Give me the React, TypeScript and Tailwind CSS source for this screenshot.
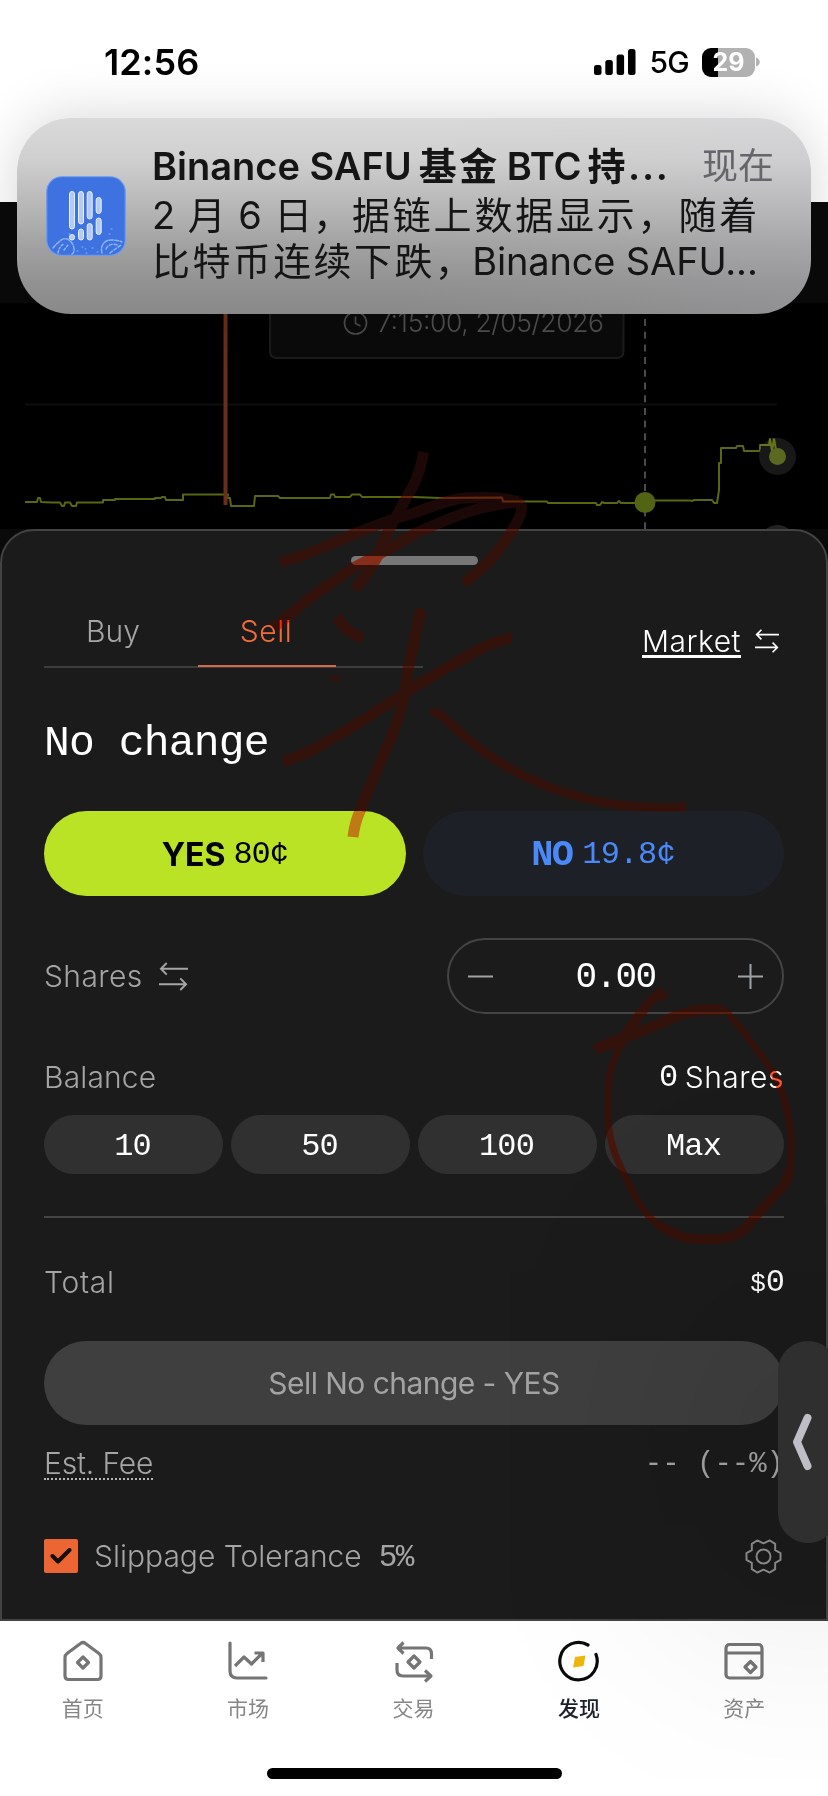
import React from "react";

const SANS = "font-['Inter','Noto_Sans_CJK_SC',sans-serif]";
const MONO = "font-['Liberation_Mono',monospace]";

function StatusBar() {
  return (
    <div className="flex h-[124px] items-center justify-between bg-white pl-[104px] pr-[67px]">
      <span className="text-[36px] font-semibold leading-none tracking-[0.1px] text-black">12:56</span>
      <div className="flex items-center">
        <svg width="42" height="28" viewBox="0 0 42 28" className="mr-[13px]">
          <rect x="0" y="17" width="7.500" height="10" rx="2.5" />
          <rect x="11.3" y="12" width="7.500" height="15" rx="2.5" />
          <rect x="22.6" y="6.500" width="7.500" height="20.500" rx="2.5" />
          <rect x="34" y="1" width="7.500" height="26" rx="2.500" />
        </svg>
        <span className="mr-[13px] text-[30px] font-medium leading-none tracking-[-0.700px] text-black">5G</span>
        <div className="relative flex h-[29px] w-[53px] items-center justify-center overflow-hidden rounded-[9px] bg-[linear-gradient(90deg,#000_0_16px,#b2b2b2_16px)]">
          <span className="text-[25px] font-bold leading-none text-white">29</span>
        </div>
        <svg width="5" height="10" viewBox="0 0 5 10" className="ml-[1px]">
          <path d="M0 0.500C5 2 5 8 0 9.500Z" fill="#b2b2b2" />
        </svg>
      </div>
    </div>
  );
}

function AppIcon() {
  const bars: [number, number, number][] = [
    [26, 15.500, 37.500], [35, 15.500, 32.500], [43.700, 15.500, 27.500], [52.700, 21.500, 16],
    [26, 58.500, 5.500], [35, 53, 11], [43.700, 47.500, 16.500], [52.700, 42, 16.500],
  ];
  return (
    <svg width="80" height="80" viewBox="0 0 80 80" className="shrink-0">
      <rect x="0.75" y="0.75" width="78.500" height="78.500" rx="15" fill="#3d72e0" stroke="#6f9cf0" strokeWidth="1.200" />
      {bars.map(([x, y, h], i) => (
        <rect key={i} x={x - 2.500} y={y} width="5" height={h} rx="2.500" fill="#b4cbf6" stroke="#e6effe" strokeWidth="1" />
      ))}
      <g fill="none" stroke="#a9c8fa" strokeWidth="1.500" strokeLinecap="round" opacity="0.75">
        <path d="M7 72c3-4 5-5 8-8 5-3 10 0 12 5s1 8-1 9" strokeDasharray="4 1.500" />
        <path d="M12 77c1-5 3-8 6-9M18 74l4-5" strokeDasharray="2 2" />
        <path d="M56 77c-2-7 2-13 9-13 5 0 9 1 11 2" strokeDasharray="4 1.500" />
        <path d="M60 73c2-4 6-6 12-4M64 77l4-3 7-5" strokeDasharray="3 2" />
        <path d="M31 75h1M36 71h1M40 77h1M46 72h1M51 76h1M63 58h1M65 53h1M23 58h1M39 73h1" strokeWidth="1" />
      </g>
    </svg>
  );
}

function Notification() {
  return (
    <div className="absolute left-[17px] top-[118px] flex h-[196px] w-[794px] items-center rounded-[54px] bg-[linear-gradient(180deg,#dadada_0%,#d0d0d0_20%,#bababa_42%,#a2a2a2_65%,#919191_85%,#898989_100%)] pl-[29px] shadow-[0_0_56px_rgba(0,0,0,0.17)]">
      <div className="pointer-events-none absolute inset-0 rounded-[54px] bg-[linear-gradient(100deg,transparent_50%,rgba(200,198,215,0.12)_100%)]" />
      <AppIcon />
      <div className="relative ml-[26px] flex w-[622px] flex-col whitespace-nowrap pb-[7px] text-[#151515]">
        <div className="flex h-[50px] items-center justify-between font-semibold">
          <span className="flex items-center text-[38px] leading-none">
            <span>Binance SAFU</span>
            <span className="ml-[7px] text-[38px] font-bold tracking-[2.500px]">基金</span>
            <span className="ml-[7px]">BTC</span>
            <span className="ml-[6px] text-[38px] font-bold tracking-[2.500px]">持</span>
            <span className="tracking-[1.700px]">...</span>
          </span>
          <span className="text-[36px] font-normal leading-none text-[#66656a]">现在</span>
        </div>
        <div className="flex h-[47px] items-center text-[38px] leading-none">
          <span className="tracking-[0.900px]">2 月 6 日，</span>
          <span className="tracking-[2.800px]">据链上数据显示，随着</span>
        </div>
        <div className="flex h-[46px] items-center text-[38px] leading-none">
          <span className="mr-[-3px] tracking-[2.400px]">比特币连续下跌，</span>
          <span className="tracking-[-0.150px]">Binance SAFU...</span>
        </div>
      </div>
    </div>
  );
}

function Chart() {
  return (
    <div className="h-[405px] bg-[#0a0a0a] pt-[101px]">
      <div className="h-[226px] bg-black">
        <svg width="828" height="226" viewBox="0 303 828 226" className="block">
          <path d="M25 404.500H777" stroke="#0e0e0e" strokeWidth="2" />
          <path d="M270 290V351q0 7 7 7H616.500q7 0 7-7V290Z" fill="#0b0b0b" stroke="#1c1c1c" strokeWidth="2" />
          <circle cx="355.500" cy="323" r="11" fill="none" stroke="#4a4a4a" strokeWidth="1.700" />
          <path d="M355.500 316.500v7l5 2.500" fill="none" stroke="#4a4a4a" strokeWidth="1.700" />
          <text x="377" y="332" fill="#505050" fontSize="26.500" fontWeight="300" textLength="227">7:15:00, 2/05/2026</text>
          <path d="M645 306V529" stroke="#4b4b4b" strokeWidth="2" strokeDasharray="7 5.700" strokeDashoffset="-13" />
          <path
            d="M25 502H37L38 498H40L41 502L52 502.500H60L62 506H64L65 502.500H70L72 506H76L77 502.500H103V500H115V499H155V498H161L162 497H165L166 500H183V494.500H228L227 498H230L231 506H254L255 496H278L280 498H330L331 494.500H334L335 497H350L352 494.500H360L362 497H414L440 498L502 497.500L503 501.500H547L548 503H596L597 505H600L602 502L604 503H617L619 501L621 503H645L654 500.500H690L692 501L694 500H712L714 503H717L719 490V463H721V448H736L737 446H743L744 451H760V445H769L770 439L772 451L773 439H775L776 450"
            fill="none" stroke="#57680f" strokeWidth="2" strokeLinejoin="round"
          />
          <path d="M225.500 303V505" stroke="#6e2d18" strokeWidth="4" />
          <circle cx="777.500" cy="456.500" r="18.500" fill="#1c1c1c" fillOpacity="0.85" />
          <path d="M760 445H769L770 439L772 451L774 439L776 450" fill="none" stroke="#64751b" strokeWidth="2" />
          <circle cx="777.500" cy="456.500" r="8.500" fill="#5a6922" />
          <circle cx="645" cy="502.500" r="10.500" fill="#526313" />
          <circle cx="777.500" cy="543.500" r="18.500" fill="#222" />
        </svg>
      </div>
    </div>
  );
}

function SwapIcon({ size, className }: { size: number; className?: string }) {
  return (
    <svg width={size} height={size} viewBox="0 0 30 30" fill="none" stroke="currentColor" strokeWidth="2" className={className}>
      <path d="M30 7H2M8 1L2 7L8 13M0 23H28M22 17L28 23L22 29" />
    </svg>
  );
}

function GearIcon() {
  return (
    <svg width="37" height="35" viewBox="0 0 38 36" fill="none" stroke="#8e8e8e" strokeWidth="2" strokeLinejoin="round">
      <path d="M19 4.500L25.500 1.500L31 5V11.500L36.500 14.500V21.500L31 24.500V31L25.500 34.500L19 31.500L12.500 34.500L7 31V24.500L1.500 21.500V14.500L7 11.500V5L12.500 1.500Z" />
      <circle cx="19" cy="18" r="7.200" />
    </svg>
  );
}

function Sheet() {
  return (
    <div className="flex h-[1092px] flex-col rounded-t-[34px] border-2 border-[#434343] bg-[#1b1b1b] px-[42px] pt-[25px] font-light text-white">
      <div className="ml-[1px] h-[9px] w-[127px] self-center rounded-full bg-[#777]" />

      <div className="mt-[38px] flex h-[65px] justify-between">
        <div className="flex w-[379px] gap-[16px] border-b-2 border-[#3c3d3d] text-[30px]">
          <div className="flex w-[138px] items-center justify-center pb-[6px] text-[#a5a5a5]">Buy</div>
          <div className="-mb-px flex w-[138px] items-center justify-center border-b-2 border-[#d2694a] pb-[6px] pr-[2px] tracking-[0.500px] text-[#f26b3a]">Sell</div>
        </div>
        <div className="flex items-center pr-[5px] pt-[12px]">
          <span className="border-b-[3px] border-white text-[30px] leading-[29px] tracking-[0.500px]"><span className="relative top-[1px]">Market</span></span>
          <SwapIcon size={24} className="mb-[2px] ml-[14px]" />
        </div>
      </div>

      <div className={`${MONO} mt-[47px] flex h-[56px] items-center whitespace-pre text-[43px] font-normal leading-none tracking-[-0.850px]`}>No change</div>

      <div className="mt-[40px] flex h-[85px] gap-[17px]">
        <div className="flex flex-1 items-center justify-center rounded-full bg-[#bae325] text-black">
          <span className="pt-[2px] text-[32px] font-bold leading-none">YES</span>
          <span className={`${MONO} ml-[8px] pt-[3px] text-[32px] font-normal leading-none tracking-[-1.100px]`}>80¢</span>
        </div>
        <div className="flex flex-1 items-center justify-center rounded-full bg-[#1e2028] text-[#4a8af8]">
          <span className={`${MONO} pt-[3px] text-[37px] font-bold leading-none tracking-[-1.800px]`}>NO</span>
          <span className={`${MONO} ml-[10px] pt-[3px] text-[32px] font-normal leading-none tracking-[-0.600px]`}>19.8¢</span>
        </div>
      </div>

      <div className="mt-[42px] flex h-[76px] items-center justify-between">
        <div className="flex items-center text-[#a5a5a5]">
          <span className="text-[30px] leading-none tracking-[0.400px]">Shares</span>
          <SwapIcon size={29} className="ml-[16px]" />
        </div>
        <div className="flex h-full w-[337px] items-center justify-between rounded-full border-2 border-[#444] px-[19px]">
          <svg width="25" height="25" viewBox="0 0 25 25" stroke="#9fa3a5" strokeWidth="2"><path d="M0 12.500H25" /></svg>
          <span className={`${MONO} pt-[4px] text-[36px] font-normal leading-none tracking-[-1.600px]`}>0.00</span>
          <svg width="25" height="25" viewBox="0 0 25 25" stroke="#9fa3a5" strokeWidth="2"><path d="M0 12.500H25M12.500 0V25" /></svg>
        </div>
      </div>

      <div className="mt-[43px] flex h-[40px] items-center justify-between text-[30px] leading-none">
        <span className="tracking-[0.150px] text-[#a5a5a5]">Balance</span>
        <span className="flex items-center tracking-[0.500px]"><span className={`${MONO} mr-[6px] pt-[2px] text-[32px] font-normal`}>0</span>Shares</span>
      </div>

      <div className={`${MONO} mt-[18px] grid h-[59px] grid-cols-4 gap-[8px] text-[32px] font-normal leading-none tracking-[-0.900px]`}>
        {["10", "50", "100", "Max"].map((v) => (
          <div key={v} className="flex items-center justify-center rounded-full bg-[#303030] pr-[2px] pt-[4px]">{v}</div>
        ))}
      </div>

      <div className="mt-[42px] h-[2px] shrink-0 bg-[#454545]" />

      <div className="mt-[44px] flex h-[40px] items-center justify-between text-[30px] leading-none">
        <span className="tracking-[0.700px] text-[#a5a5a5]">Total</span>
        <span className={`${MONO} pt-[2px] font-normal`}><span className="text-[26px]">$</span><span className="text-[32px] tracking-[-1px]">0</span></span>
      </div>

      <div className="mt-[39px] flex h-[84px] items-center justify-center rounded-full bg-[#3f3f3f] text-[30px] font-normal leading-none tracking-[-0.550px] text-[#a3a3a3]">
        Sell No change - YES
      </div>

      <div className="mt-[17px] flex h-[40px] items-center justify-between text-[30px] leading-none text-[#a5a5a5]">
        <span className="border-b-2 border-dotted border-[#b5b5b5] leading-[34px] tracking-[-0.150px]"><span className="relative top-[2px]">Est. Fee</span></span>
        <span className={`${MONO} whitespace-pre pt-[4px] text-[29px] font-normal`}>-- (--%)</span>
      </div>

      <div className="mt-[54px] flex h-[40px] items-center text-[30px] leading-none text-[#a5a5a5]">
        <div className="flex h-[34px] w-[34px] items-center justify-center rounded-[2px] bg-[#ec6633]">
          <svg width="22" height="18" viewBox="0 0 22 18" fill="none" stroke="#111" strokeWidth="4" strokeLinecap="round" strokeLinejoin="round">
            <path d="M2.500 9L8 14.500L19.500 3" />
          </svg>
        </div>
        <span className="ml-[16px]">Slippage Tolerance</span>
        <span className={`${MONO} ml-[17px] pt-[2px] text-[31px] font-normal tracking-[-1.500px]`}>5%</span>
        <span className="ml-auto mr-[2px]"><GearIcon /></span>
      </div>
    </div>
  );
}

function Markup({ color, className }: { color: string; className: string }) {
  return (
    <svg width="828" height="1796" viewBox="0 0 828 1796" fill="none" stroke={color} strokeWidth="11" strokeLinejoin="round" className={`pointer-events-none absolute left-0 top-0 ${className}`}>
      <path d="M424 452C421 466 418 477 413 486L387 533L377 557C371 569 364 580 354 589" />
      <path d="M280 562C293 559 305 555 317 550C334 543 350 535 367 529C384 522 400 517 414 513C431 507 447 500 464 498C480 497 500 497 515 501Q523 503 521 513C516 526 508 538 497 552C487 564 477 574 464 583" />
      <path d="M273 628L310 598L353 568L387 550L414 534C436 524 459 514 481 508C495 505 508 503 520 501" />
      <path d="M337 617C342 626 350 634 363 638" />
      <path d="M329 679H341" strokeWidth="4" />
      <path d="M421 609C418 621 416 632 414 643L408 670C406 684 405 693 403 702C400 713 397 723 393 733L367 793L360 811" />
      <path d="M360 811C356 820 354 828 353 837" strokeOpacity="0.7" />
      <path d="M283 762C297 757 309 752 320 746L360 722L405 693L414 687L464 658C480 649 494 641 512 638" />
      <path d="M430 712C440 712 446 719 452 725C468 741 488 755 507 767C523 776 540 784 557 790C572 795 586 799 601 802C630 808 657 808 686 807" strokeWidth="9" />
      <path d="M595 1050C606 1044 616 1041 627 1037L661 1023C671 1018 680 1014 691 1012C701 1009 711 1009 722 1010" />
      <path d="M720 1009Q726 1010 729 1015C737 1024 745 1033 751 1042C758 1052 766 1061 772 1071C779 1081 782 1092 785 1103C789 1117 791 1127 791 1141C791 1154 791 1167 788 1177" strokeWidth="7" />
      <path d="M788 1170Q789 1180 783 1186L761 1210L744 1230C736 1236 728 1238 719 1239C708 1240 697 1239 687 1238C677 1236 668 1230 660 1226" strokeWidth="10" />
      <path d="M667 1231C658 1226 652 1220 646 1213C638 1203 632 1191 627 1180C620 1167 614 1154 611 1140C607 1124 608 1115 608 1103C608 1090 608 1081 611 1069C614 1057 618 1051 622 1041" strokeWidth="7" />
      <path d="M620 1046C625 1034 632 1024 641 1013C648 1004 653 997 660 993L665 999" strokeWidth="10" />
    </svg>
  );
}

const TABS = [
  {
    label: "首页",
    icon: (
      <>
        <path d="M18.500 3.500Q21 1.500 23.500 3.500L37 13.500Q39 15 39 17.500V36Q39 39.500 35.500 39.500H6.500Q3 39.500 3 36V17.500Q3 15 5 13.500Z" />
        <path d="M21 17L26.500 22.500L21 28L15.500 22.500Z" />
      </>
    ),
  },
  {
    label: "市场",
    icon: (
      <>
        <path d="M3 3V31Q3 38 10 38H39" strokeLinecap="round" />
        <path d="M8 26L17 17L24.500 24L35.500 13M27.500 13H36V22" />
      </>
    ),
  },
  {
    label: "交易",
    icon: (
      <>
        <path d="M38.500 19V14Q38.500 8 33 8H5M10.500 2.500L5 8L10.500 13.500M4 23V30Q4 36 10 36H37M32 30.500L38 36L32 41.500" />
        <path d="M21 16L27 22L21 28L15 22Z" />
      </>
    ),
  },
  {
    label: "发现",
    active: true,
    icon: (
      <>
        <path d="M30 5A18.700 18.700 0 1 0 38 14.500" stroke="#0a0a0a" strokeLinecap="round" />
        <path d="M17 17L27.500 15.500L25.500 26L15 27.500Z" fill="#eeb70e" stroke="none" />
      </>
    ),
  },
  {
    label: "资产",
    icon: (
      <>
        <rect x="3" y="4.500" width="36" height="33.500" rx="3.500" />
        <path d="M3 13H39" />
        <path d="M27.500 21.500L33 27L27.500 32.500L22 27Z" />
      </>
    ),
  },
];

function TabBar() {
  return (
    <div className="flex h-[175px] flex-col items-center bg-white">
      <div className="flex w-full pr-[1px] pt-[19px]">
        {TABS.map((t) => (
          <div key={t.label} className="flex flex-1 flex-col items-center">
            <svg width="42" height="43" viewBox="0 0 42 43" fill="none" stroke="#757575" strokeWidth="3.200" strokeLinejoin="round">{t.icon}</svg>
            <span className={`mt-[14px] text-[21px] leading-[24px] ${t.active ? "font-medium text-[#1c212b]" : "text-[#868686]"}`}>{t.label}</span>
          </div>
        ))}
      </div>
      <div className="mt-[47px] h-[11px] w-[295px] rounded-full bg-black" />
    </div>
  );
}

export default function App() {
  return (
    <div className={`${SANS} relative isolate flex h-[1796px] w-[828px] flex-col overflow-hidden bg-white`}>
      <StatusBar />
      <div className="h-[78px] bg-white" />
      <div className="-mb-[78px] bg-[#0a0a0a]">
        <Chart />
      </div>
      <div className="relative flex flex-col">
        <Sheet />
        <TabBar />
      </div>
      <Markup color="#ff5028" className="mix-blend-multiply" />
      <Markup color="#1c0907" className="mix-blend-screen" />
      <div className="absolute left-[778px] top-[1341px] flex h-[202px] w-[60px] items-center rounded-[32px] bg-[#2f2f2f] pl-[14px] shadow-[0_0_260px_40px_rgba(0,0,0,0.26)]">
        <svg width="20" height="58" viewBox="0 0 20 58" fill="none" stroke="#bfbec6" strokeWidth="8" strokeLinecap="round" strokeLinejoin="round">
          <path d="M15.500 5L5 29L15.500 53" />
        </svg>
      </div>
      <Notification />
    </div>
  );
}
